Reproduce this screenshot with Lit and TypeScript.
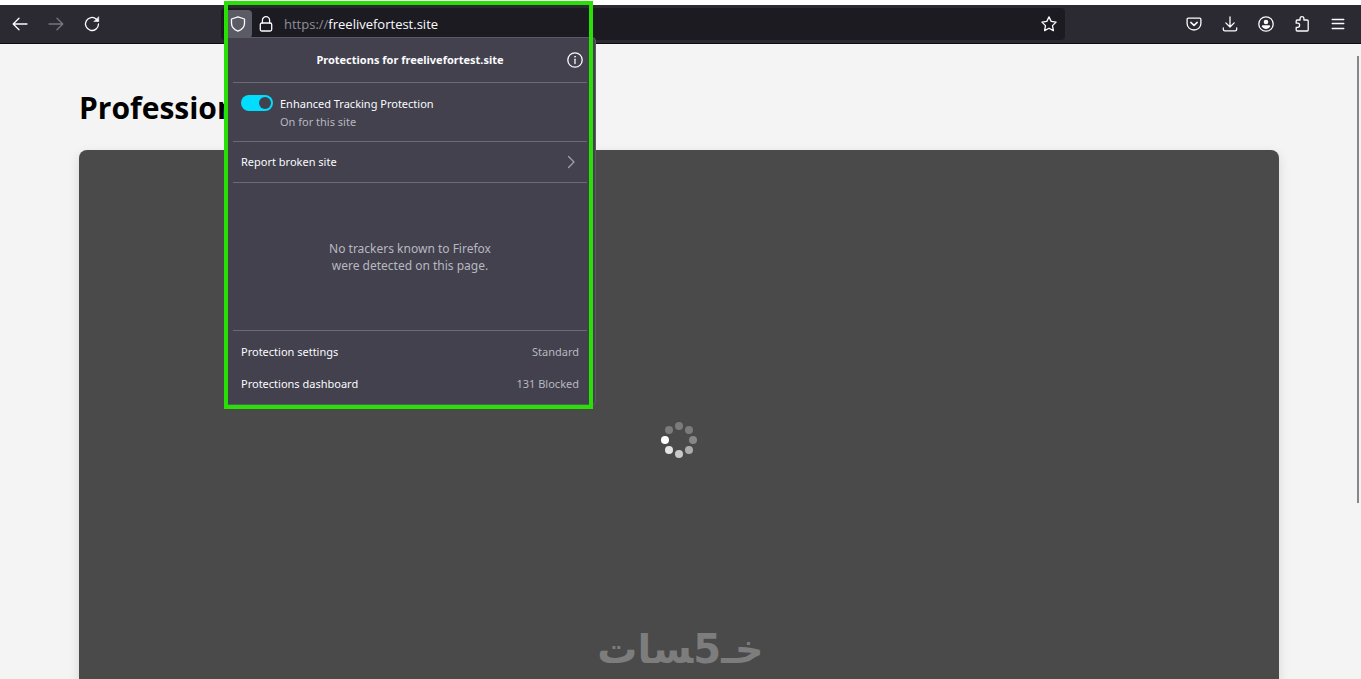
import { LitElement, html, css, svg } from "lit";
import { customElement, state } from "lit/decorators.js";

const icon = (body: unknown, size = 16) => html`
  <svg width=${size} height=${size} viewBox="0 0 16 16" fill="none" stroke="currentColor"
    stroke-width="1.3" stroke-linecap="round" stroke-linejoin="round" aria-hidden="true">${body}</svg>`;

const icons = {
  back: svg`<path d="M15 8H1.5M7 2.2 1.2 8 7 13.8"/>`,
  forward: svg`<path d="M1 8h13.5M9 2.2 14.8 8 9 13.8"/>`,
  reload: svg`<path d="M14.5 8A6.500 6.500 0 1 1 12.400 3.200L14 4.800"/><path d="M14.700 1v4.500h-4.500z" fill="currentColor" stroke-width=".6"/>`,
  shield: svg`<path d="M8 .9 14.500 3v4.200c0 3.600-2.600 6.400-6.500 8-3.900-1.600-6.500-4.400-6.500-8V3z"/>`,
  lock: svg`<path d="M4.400 7V4.300a3.600 3.600 0 0 1 7.200 0V7"/><rect x="2.300" y="7" width="11.400" height="8" rx="1.500"/>`,
  star: svg`<path d="M8 .9l2.200 4.500 4.900.7-3.600 3.500.9 5L8 12.200l-4.400 2.400.9-5L.9 6.100l4.900-.7z"/>`,
  pocket: svg`<path d="M2.300 2.200h11.400c.7 0 1.200.5 1.200 1.200v4.200a6.900 6.400 0 0 1-13.800 0V3.400c0-.7.5-1.200 1.200-1.200z"/><path d="M4.800 6.400 8 9.400l3.200-3" stroke-width="1.500"/>`,
  download: svg`<path d="M8 .8v10M3.800 6.900 8 11l4.200-4.100M1.300 12v1.300c0 .9.700 1.600 1.600 1.600h10.200c.9 0 1.600-.7 1.600-1.600V12"/>`,
  account: svg`<circle cx="8" cy="8" r="7.200"/><circle cx="8" cy="6" r="2.300" fill="currentColor" stroke="none"/><path d="M3.900 10.300c0-.7.500-1 1-1h6.200c.5 0 1 .3 1 1-.8 1.700-2.300 2.700-4.100 2.700s-3.300-1-4.100-2.700z" fill="currentColor" stroke="none"/>`,
  extension: svg`<path d="M2.200 7.200V5c0-.6.4-1 1-1h2.900V2.600a1.900 1.900 0 0 1 3.800 0V4h3.300c.6 0 1 .4 1 1v9c0 .6-.4 1-1 1h-10c-.6 0-1-.4-1-1v-2.600h1.500a1.900 2.100 0 0 0 0-4.200z"/>`,
  menu: svg`<path d="M2.200 3.500h11.600M2.200 7.500h11.600M2.200 12.500h11.600"/>`,
  info: svg`<circle cx="8" cy="8" r="7.200"/><path d="M8 7.200v4.300"/><circle cx="8" cy="4.700" r=".5" fill="currentColor" stroke-width=".7"/>`,
  chevron: svg`<path d="M5.500 2.500 11 8l-5.500 5.500"/>`,
};

@customElement("protections-panel")
export class ProtectionsPanel extends LitElement {
  @state() private enabled = true;

  static styles = css`
    :host {
      display: block;
      box-sizing: border-box;
      padding: 0 8px 4px;
      background: #42414d;
      border: 1px solid #5b5b66;
      border-radius: 0 4px 4px 4px;
      color: #fbfbfe;
      font-family: "Noto Sans", sans-serif;
      font-size: 11px;
      line-height: 18px;
    }
    button {
      border: 0;
      padding: 0;
      background: none;
      color: inherit;
      font: inherit;
    }
    svg { display: block; }
    .header, .tracking, .report {
      display: flex;
      align-items: center;
      border-bottom: 1px solid #6b6a75;
    }
    .header { height: 44px; padding-right: 4px; }
    .title {
      flex: 1;
      margin: 0;
      padding-left: 20px;
      font-size: 11px;
      font-weight: 700;
      text-align: center;
    }
    .tracking { padding: 12px 8px 10px; gap: 7px; align-items: flex-start; }
    .toggle {
      appearance: none;
      width: 32px;
      height: 16px;
      margin: 0;
      border-radius: 8px;
      background: #00ddff;
      display: grid;
      align-items: center;
      justify-items: end;
      padding: 0 2px;
      box-sizing: border-box;
    }
    .toggle::before {
      content: "";
      width: 12px;
      height: 12px;
      border-radius: 50%;
      background: #42414d;
    }
    .toggle:not(:checked) { background: #8f8f9d; justify-items: start; }
    .labels { display: grid; }
    .muted { color: #b8b8c0; }
    .report { box-sizing: border-box; width: 100%; height: 41px; padding: 0 8px; justify-content: space-between; }
    .chevron { color: #9ba3b0; }
    .message {
      margin: 0;
      padding: 57px 0 56px;
      border-bottom: 1px solid #6b6a75;
      color: #b8b8c0;
      font-size: 12px;
      line-height: 17px;
      text-align: center;
    }
    .footer { padding-top: 5px; }
    .row {
      display: flex;
      width: 100%;
      height: 32px;
      padding: 0 8px;
      align-items: center;
      justify-content: space-between;
    }
  `;

  render() {
    return html`
      <div class="header">
        <h2 class="title">Protections for freelivefortest.site</h2>
        <button aria-label="Information">${icon(icons.info)}</button>
      </div>
      <div class="tracking">
        <input id="etp" class="toggle" type="checkbox" .checked=${this.enabled}
          @change=${(e: Event) => (this.enabled = (e.target as HTMLInputElement).checked)} />
        <label class="labels" for="etp">
          <span>Enhanced Tracking Protection</span>
          <span class="muted">${this.enabled ? "On" : "Off"} for this site</span>
        </label>
      </div>
      <button class="report"><span>Report broken site</span><span class="chevron">${icon(icons.chevron)}</span></button>
      <p class="message">No trackers known to Firefox<br />were detected on this page.</p>
      <div class="footer">
        <button class="row"><span>Protection settings</span><span class="muted">Standard</span></button>
        <button class="row"><span>Protections dashboard</span><span class="muted">131 Blocked</span></button>
      </div>
    `;
  }
}

@customElement("app-root")
export class AppRoot extends LitElement {
  static styles = css`
    :host {
      display: flex;
      flex-direction: column;
      position: relative;
      box-sizing: border-box;
      height: 100vh;
      padding-top: 5px;
      overflow: hidden;
      background: #fff;
      font-family: "Open Sans", "Noto Sans", sans-serif;
    }
    button {
      border: 0;
      padding: 0;
      background: none;
      color: inherit;
      display: grid;
      place-items: center;
      width: 32px;
      height: 32px;
    }
    svg { display: block; }
    .toolbar {
      display: flex;
      flex: none;
      align-items: center;
      height: 38px;
      padding: 0 7px 0 4px;
      background: #2b2a33;
      border-bottom: 1px solid #0c0c0d;
      color: #fbfbfe;
    }
    .group { display: flex; gap: 4px; }
    .spring { flex: 1; }
    .dim { color: #77767e; }
    .urlbar {
      position: relative;
      display: flex;
      flex: 0 1 844px;
      box-sizing: border-box;
      align-items: center;
      height: 32px;
      padding: 0 2px 0 3px;
      background: #1c1b22;
      border-radius: 4px;
      font-size: 13px;
    }
    .urlbar button { height: 28px; width: 28px; }
    .urlbar .shield { background: #5b5b66; border-radius: 4px; }
    .address { display: flex; flex: 1; padding-left: 4px; color: #8f8f99; }
    .address input {
      flex: 1;
      min-width: 0;
      padding: 0;
      border: 0;
      outline: 0;
      background: none;
      color: #fbfbfe;
      font: inherit;
    }
    .panel { position: absolute; z-index: 2; top: 29px; left: 3px; width: 372px; }
    .frame {
      position: absolute;
      z-index: 3;
      top: 1px;
      left: 224px;
      width: 369px;
      height: 408px;
      box-sizing: border-box;
      border: 4px solid #28e004;
      pointer-events: none;
    }
    .page { flex: 1; min-height: 0; padding: 40px 24px 0 21px; background: #f4f4f4; }
    .content { max-width: 1200px; margin: 0 auto; }
    .heading { margin: 0 0 18px; font-size: 30px; line-height: 48px; font-weight: 700; color: #000; }
    .player {
      display: grid;
      place-items: center;
      aspect-ratio: 60 / 29;
      border-radius: 8px;
      background: #4a4a4a;
      box-shadow: 0 4px 12px rgba(0, 0, 0, 0.12);
    }
    .scrollbar {
      position: absolute;
      top: 56px;
      right: 2px;
      width: 2px;
      height: 447px;
      background: #85878c;
    }
    .watermark {
      position: absolute;
      bottom: 0;
      left: 0;
      right: 0;
      color: #7d7d7d;
      font: 700 40px/60px "DejaVu Sans", sans-serif;
      text-align: center;
    }
  `;

  private dots = [
    [18, 4, "#7b7b7d"], [28, 8, "#7b7b7d"], [32, 18, "#87878a"], [28, 28, "#a9adb0"],
    [18, 32, "#cacac8"], [8, 28, "#e4e4e4"], [4, 18, "#ffffff"], [8, 8, "#7b7b7d"],
  ];

  private tool(name: keyof typeof icons, label: string, cls = "") {
    return html`<button class=${cls} aria-label=${label}>${icon(icons[name])}</button>`;
  }

  render() {
    return html`
      <header class="toolbar">
        <nav class="group">
          ${this.tool("back", "Back")}${this.tool("forward", "Forward", "dim")}${this.tool("reload", "Reload")}
        </nav>
        <span class="spring"></span>
        <div class="urlbar">
          ${this.tool("shield", "Tracking protection", "shield")}${this.tool("lock", "Connection secure")}
          <label class="address">https://<input aria-label="Address" value="freelivefortest.site" /></label>
          ${this.tool("star", "Bookmark this page")}
          <protections-panel class="panel"></protections-panel>
        </div>
        <span class="spring"></span>
        <nav class="group">
          ${this.tool("pocket", "Save to Pocket")}${this.tool("download", "Downloads")}
          ${this.tool("account", "Account")}${this.tool("extension", "Extensions")}${this.tool("menu", "Menu")}
        </nav>
      </header>
      <main class="page">
        <div class="content">
          <h1 class="heading">Profession</h1>
          <div class="player" role="status" aria-label="Loading">
            <svg width="36" height="36" viewBox="0 0 36 36">
              ${this.dots.map(([x, y, c]) => svg`<circle cx=${x} cy=${y} r="4" fill=${c}></circle>`)}
            </svg>
          </div>
        </div>
      </main>
      <div class="scrollbar"></div>
      <div class="watermark" lang="ar" dir="rtl">خـ5&zwj;سات</div>
      <div class="frame"></div>
    `;
  }
}
